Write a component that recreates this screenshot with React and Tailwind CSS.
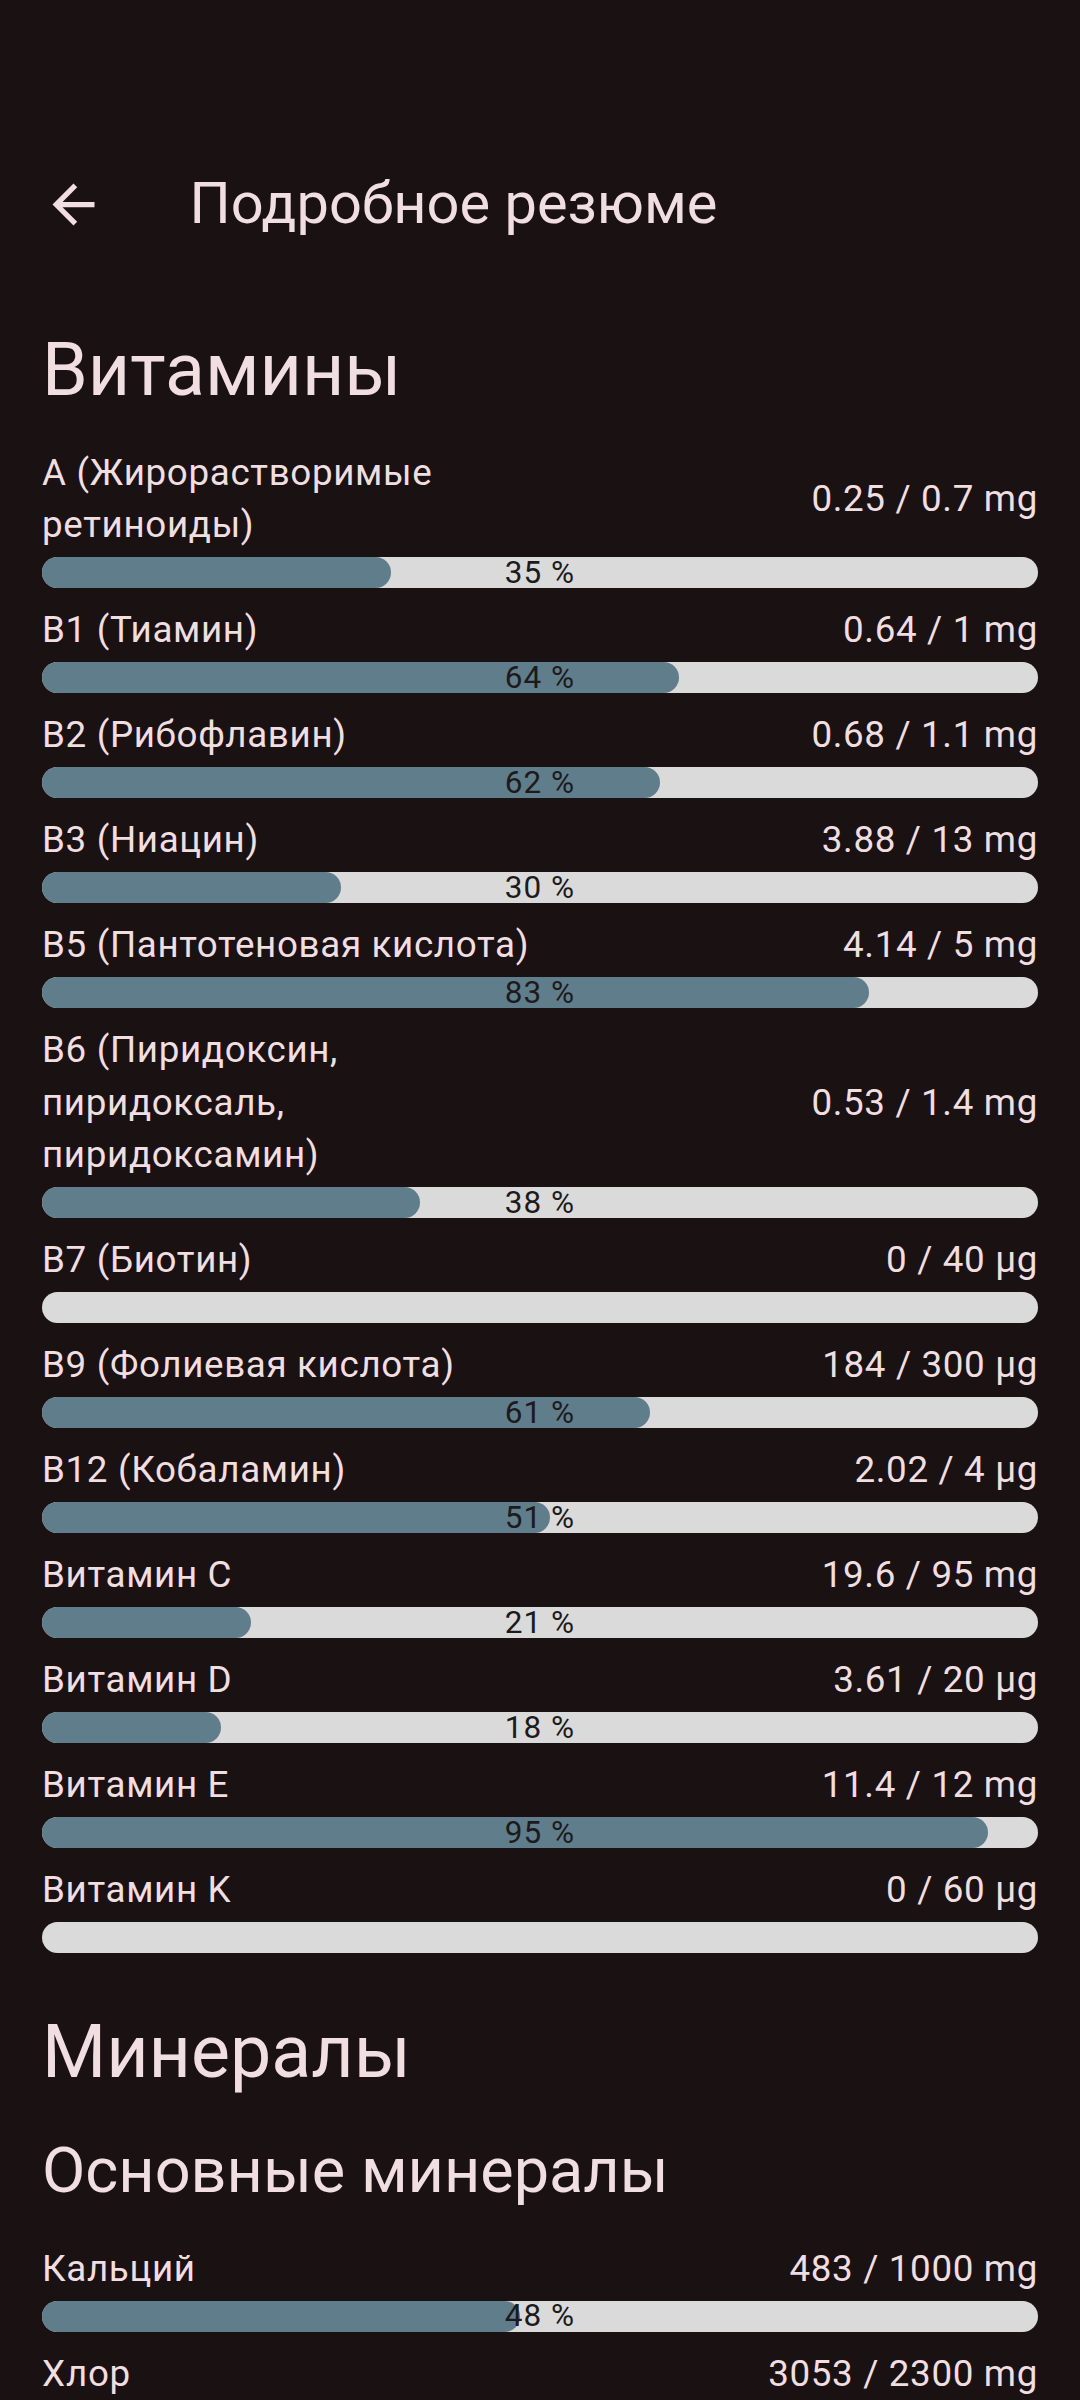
const vitamins = [
  { name: "A (Жирорастворимые ретиноиды)", value: "0.25 / 0.7 mg", pct: 35 },
  { name: "B1 (Тиамин)", value: "0.64 / 1 mg", pct: 64 },
  { name: "B2 (Рибофлавин)", value: "0.68 / 1.1 mg", pct: 62 },
  { name: "B3 (Ниацин)", value: "3.88 / 13 mg", pct: 30 },
  { name: "B5 (Пантотеновая кислота)", value: "4.14 / 5 mg", pct: 83 },
  { name: "B6 (Пиридоксин, пиридоксаль, пиридоксамин)", value: "0.53 / 1.4 mg", pct: 38 },
  { name: "B7 (Биотин)", value: "0 / 40 µg", pct: 0 },
  { name: "B9 (Фолиевая кислота)", value: "184 / 300 µg", pct: 61 },
  { name: "B12 (Кобаламин)", value: "2.02 / 4 µg", pct: 51 },
  { name: "Витамин C", value: "19.6 / 95 mg", pct: 21 },
  { name: "Витамин D", value: "3.61 / 20 µg", pct: 18 },
  { name: "Витамин E", value: "11.4 / 12 mg", pct: 95 },
  { name: "Витамин K", value: "0 / 60 µg", pct: 0 },
];

const minerals = [
  { name: "Кальций", value: "483 / 1000 mg", pct: 48 },
  { name: "Хлор", value: "3053 / 2300 mg", pct: 133 },
  { name: "Магний", value: "112 / 400 mg", pct: 28 },
];

function NutrientRow({ item }) {
  const fill = Math.min(item.pct, 100);

  return (
    <div className="mb-[15.75px]">
      <div className="flex items-center justify-between text-[36.75px] leading-[52.5px] tracking-[0.66px] text-[#f0dee0]">
        <p className="max-w-[512px]">{item.name}</p>
        <p className="whitespace-nowrap">{item.value}</p>
      </div>
      <div className="relative mt-[5.25px] h-[31.5px] w-full rounded-full bg-[#dadada]">
        {fill > 0 && (
          <div
            className="h-full rounded-full bg-[#607d8b]"
            style={{ width: `${fill}%` }}
          />
        )}
        {item.pct > 0 && (
          <div className="absolute inset-0 flex items-center justify-center text-[31.5px] leading-[42px] tracking-[1.05px] text-[#1d1a1b]">
            {item.pct} %
          </div>
        )}
      </div>
    </div>
  );
}

export default function App() {
  return (
    <div
      className="h-[2400px] overflow-hidden bg-[#1a1113] pt-[120px]"
      style={{ fontFamily: "Roboto, 'Noto Sans', sans-serif" }}
    >
      <header className="flex h-[168px] items-center">
        <button className="ml-[10.5px] flex h-[126px] w-[126px] items-center justify-center text-[#f0dee0]">
          <svg viewBox="0 0 24 24" className="h-[63px] w-[63px]" fill="currentColor">
            <path d="M20 11H7.83l5.59-5.59L12 4l-8 8 8 8 1.41-1.41L7.83 13H20v-2z" />
          </svg>
        </button>
        <h1 className="ml-[53px] text-[57.75px] leading-[73.5px] text-[#f0dee0]">
          Подробное резюме
        </h1>
      </header>

      <main className="px-[42px]">
        <h2 className="mt-[34.5px] mb-[29.5px] text-[73.5px] leading-[94.5px] text-[#f0dee0]">
          Витамины
        </h2>
        {vitamins.map((item) => (
          <NutrientRow key={item.name} item={item} />
        ))}

        <h2 className="mt-[52px] mb-[29.5px] text-[73.5px] leading-[94.5px] text-[#f0dee0]">
          Минералы
        </h2>
        <h3 className="mb-[29.5px] text-[63px] leading-[84px] text-[#f0dee0]">
          Основные минералы
        </h3>
        {minerals.map((item) => (
          <NutrientRow key={item.name} item={item} />
        ))}
      </main>
    </div>
  );
}
